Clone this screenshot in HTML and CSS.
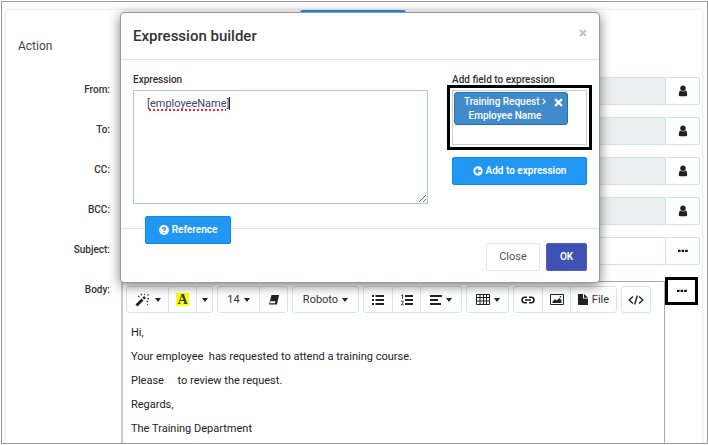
FILE: index.html
```html
<!DOCTYPE html>
<html lang="en">
<head>
<meta charset="utf-8">
<title>Expression builder</title>
<link rel="stylesheet" href="styles.css">
</head>
<body>
<svg class="defs" aria-hidden="true">
  <symbol id="user" viewBox="0 0 10 12"><circle cx="5" cy="3.2" r="2.7"/><path d="M2.4 5.4Q.8 6.2.8 10q0 1.2 1.3 1.2h5.8Q9.200 11.200 9.200 10 9.200 6.200 7.600 5.400 5 7.600 2.400 5.400z"/></symbol>
  <symbol id="dots" viewBox="0 0 10 4"><path d="M0 .7h2.600v2.400H0zM3.600.7h2.600v2.400H3.600zM7.200.7h2.600v2.400H7.200z"/></symbol>
  <symbol id="caret" viewBox="0 0 6 4"><path d="M0 0h6L3 4z"/></symbol>
</svg>
<main class="frame">
  <section class="panel">
    <button class="tab" type="button" aria-label="Add action"></button>
    <h1 class="heading">Action</h1>
    <form class="rows">
      <div class="row"><label for="from">From:</label><input id="from" type="text" disabled><button class="addon" type="button" aria-label="Pick sender"><svg class="user"><use href="#user"/></svg></button></div>
      <div class="row"><label for="to">To:</label><input id="to" type="text" disabled><button class="addon" type="button" aria-label="Pick recipient"><svg class="user"><use href="#user"/></svg></button></div>
      <div class="row"><label for="cc">CC:</label><input id="cc" type="text" disabled><button class="addon" type="button" aria-label="Pick CC"><svg class="user"><use href="#user"/></svg></button></div>
      <div class="row"><label for="bcc">BCC:</label><input id="bcc" type="text" disabled><button class="addon" type="button" aria-label="Pick BCC"><svg class="user"><use href="#user"/></svg></button></div>
      <div class="row"><label for="subject">Subject:</label><input id="subject" type="text"><button class="addon" type="button" aria-label="Subject expression"><svg class="dots"><use href="#dots"/></svg></button></div>
      <div class="row body-row">
        <span class="label" id="body-label">Body:</span>
        <div class="editor">
          <div class="toolbar">
            <div class="group">
              <button class="menu" type="button" aria-label="Style"><svg width="16" height="14" viewBox="0 0 16 14"><path d="M1.500 12.500 7.500 6.500" stroke="#222" stroke-width="2.800"/><path d="M8.300 5.700 10 4" stroke="#222" stroke-width="2.600"/><path d="M3 3l1.500 1M6 .8l.6 1.600M9.600.8 9.300 2M12.500 2.500l1-1M12.200 5.600h1.800M11.600 8l1.200 1M12 11.200l.8.5" stroke="#333" stroke-width="1.100"/></svg><svg class="caret"><use href="#caret"/></svg></button>
              <button class="tool" type="button"><span class="mark">A</span></button>
              <button class="more" type="button" aria-label="More colors"><svg class="caret"><use href="#caret"/></svg></button>
            </div>
            <div class="group">
              <button class="menu" type="button">14<svg class="caret"><use href="#caret"/></svg></button>
              <button class="tool" type="button" aria-label="Clear formatting"><svg width="12" height="10" viewBox="0 0 12 10"><path d="M3.500 0h7.500L9 9.500H1z" fill="#222"/><path d="M2.400 6.300h5.100L7 8.200H1.900z" fill="#fff"/></svg></button>
            </div>
            <div class="group">
              <button class="font" type="button">Roboto<svg class="caret"><use href="#caret"/></svg></button>
            </div>
            <div class="group">
              <button class="tool" type="button" aria-label="Bulleted list"><svg width="12" height="10" viewBox="0 0 12 10" fill="#222"><path d="M0 0h2v2H0zM0 4h2v2H0zM0 8h2v2H0zM3.500 0H12v2H3.500zM3.500 4H12v2H3.500zM3.500 8H12v2H3.500z"/></svg></button>
              <button class="tool" type="button" aria-label="Numbered list"><svg width="12" height="12" viewBox="0 0 12 12"><path d="M4 1h8v2H4zM4 5h8v2H4zM4 9h8v2H4z" fill="#222"/><path d="M.3 1.400 1.600.8V5M.2 7.300Q2.300 6.400 2.200 8T.3 10.800h2.300" fill="none" stroke="#222" stroke-width=".9"/></svg></button>
              <button class="menu" type="button" aria-label="Paragraph"><svg width="12" height="10" viewBox="0 0 12 10"><path d="M0 1h12M0 5h8M0 9h11" stroke="#222" stroke-width="2"/></svg><svg class="caret"><use href="#caret"/></svg></button>
            </div>
            <div class="group">
              <button class="menu" type="button" aria-label="Table"><svg width="14" height="11" viewBox="0 0 14 11"><path d="M.5.5h13v10H.5zM.5 3.500h13M.5 7h13M4 .5v10M7.500.5v10M10.500.5v10" fill="none" stroke="#222"/></svg><svg class="caret"><use href="#caret"/></svg></button>
            </div>
            <div class="group">
              <button class="tool" type="button" aria-label="Link"><svg width="14" height="8" viewBox="0 0 14 8"><path d="M6 1.200H3.800a2.700 2.700 0 0 0 0 5.600H6M8 1.200h2.200a2.700 2.700 0 0 1 0 5.600H8M4 4h6" fill="none" stroke="#222" stroke-width="1.600"/></svg></button>
              <button class="tool" type="button" aria-label="Picture"><svg width="14" height="11" viewBox="0 0 14 11"><path d="M.5.500h13v10H.5z" fill="none" stroke="#222"/><path d="M2.500 9V7.500L5 5l1.500 1.600L9.500 4l2 2.500V9z" fill="#222"/><circle cx="10.500" cy="2.800" r=".8" fill="#222"/></svg></button>
              <button class="file" type="button"><svg width="10" height="11" viewBox="0 0 10 11"><path d="M0 0h5v4.500h5V11H0zM6 0l4 3.700H6z" fill="#222"/></svg>File</button>
            </div>
            <div class="group">
              <button class="tool" type="button" aria-label="Code view"><svg width="16" height="10" viewBox="0 0 16 10"><path d="M5 1.500 1.200 5 5 8.500M11 1.500 14.800 5 11 8.500M9.300.5 6.700 9.500" fill="none" stroke="#222" stroke-width="1.400"/></svg></button>
            </div>
          </div>
          <div class="content" role="textbox" aria-labelledby="body-label">
            <p>Hi,</p>
            <p>Your employee&nbsp; has requested to attend a training course.</p>
            <p>Please&nbsp;&nbsp; &nbsp; to review the request.</p>
            <p>Regards,</p>
            <p>The Training Department</p>
          </div>
        </div>
        <button class="addon marked" type="button" aria-label="Body expression"><svg class="dots"><use href="#dots"/></svg></button>
      </div>
    </form>
  </section>
</main>

<div class="modal" role="dialog" aria-labelledby="modal-title">
  <header class="modal-head">
    <h2 id="modal-title">Expression builder</h2>
    <button class="close" type="button" aria-label="Dismiss"><svg width="8" height="8" viewBox="0 0 8 8"><path d="M1 1l6 6M7 1 1 7" stroke="#c2c2c2" stroke-width="2"/></svg></button>
  </header>
  <div class="modal-body">
    <div class="expression">
      <label for="expression">Expression</label>
      <div class="area"><textarea id="expression" spellcheck="false"></textarea><div class="typed"><span>[<u>employeeName</u>]</span></div></div>
    </div>
    <div class="fields">
      <span class="label" id="field-label">Add field to expression</span>
      <div class="picker" role="group" aria-labelledby="field-label">
        <div class="chip">
          <span>Training Request <svg width="4" height="7" viewBox="0 0 4 7"><path d="M.6.800 3.200 3.500.6 6.200" fill="none" stroke="#fff" stroke-width="1.200"/></svg><br>Employee Name</span>
          <button type="button" aria-label="Remove field"><svg width="9" height="9" viewBox="0 0 8 8"><path d="M1 1l6 6M7 1 1 7" stroke="#fff" stroke-width="1.900"/></svg></button>
        </div>
      </div>
      <button class="btn blue" type="button"><svg width="10" height="10" viewBox="0 0 10 10"><circle cx="5" cy="5" r="4.700" fill="#fff"/><path d="M8 5H3M5.200 2.500 2.700 5l2.500 2.500" fill="none" stroke="#2196f3" stroke-width="1.400"/></svg>Add to expression</button>
    </div>
  </div>
  <footer class="modal-foot">
    <button class="btn blue reference" type="button"><svg width="10" height="10" viewBox="0 0 10 10"><circle cx="5" cy="5" r="4.900" fill="#fff"/><path d="M3.400 3.900Q3.400 2.500 5 2.500T6.600 3.800Q6.600 4.500 5.700 4.900 5 5.200 5 6M5 6.900v1.300" fill="none" stroke="#2196f3" stroke-width="1.300"/></svg>Reference</button>
    <button class="btn plain" type="button">Close</button>
    <button class="btn ok" type="button">OK</button>
  </footer>
</div>
</body>
</html>
```
FILE: styles.css
```css
* { box-sizing: border-box; }
body { margin: 0; height: 100vh; overflow: hidden; background: #fff; color: #333; font: 11px/16px Roboto, sans-serif; position: relative; }
button, input, textarea { font: inherit; color: inherit; margin: 0; padding: 0; }
button { display: flex; align-items: center; justify-content: center; gap: 4px; border: 0; background: none; white-space: nowrap; }
svg { flex: none; }
.defs { position: absolute; width: 0; height: 0; }
.user { width: 10px; height: 12px; fill: #222; }
.dots { width: 10px; height: 4px; fill: #111; }
.caret { width: 6px; height: 4px; fill: #222; }

.frame { height: calc(100vh - 2px); margin: 1px 0 0 1px; padding: 8px 5px 0 4px; border: 1px solid #999; overflow: hidden; }
.panel { height: 600px; border-radius: 2px; box-shadow: 0 0 3px rgba(0,0,0,.18); }
.tab { width: 106px; height: 28px; margin: 0 0 0 294px; background: #2196f3; border-radius: 3px; }
.heading { margin: 0 0 22px 12px; font-size: 12px; font-weight: 400; line-height: 17px; color: #444; }

.rows { display: flex; flex-direction: column; gap: 12px; padding-right: 2px; }
.row { display: flex; height: 28px; }
.row > label, .row > .label { width: 104px; margin-right: 11px; padding-top: 5px; text-align: right; }
label, .label { font-size: 10px; font-weight: 500; line-height: 16px; color: #333; }
.row > input { flex: 1; min-width: 0; border: 1px solid #d5e2e4; border-right: 0; border-radius: 2px 0 0 2px; background: #fff; }
.row > input:disabled { background: #eaeeef; }
.addon { width: 35px; height: 28px; border: 1px solid #d5e2e4; border-radius: 0 2px 2px 0; background: #fff; }
.marked { border: 3px solid #000; border-radius: 0; width: 33px; margin-right: 2px; }
.body-row { height: auto; align-items: flex-start; }
.editor { flex: 1; min-width: 0; height: 400px; margin-top: 4px; border: 1px solid #aaa; border-left: 2px solid #ccc; }

.toolbar { display: flex; gap: 4px; padding: 4px 3px; }
.group { display: flex; height: 27px; border: 1px solid #d8e6e8; border-radius: 3px; background: #fff; }
.group button + button { border-left: 1px solid #d8e6e8; }
.more { width: 16px; }
.tool { width: 28px; }
.menu { width: 41px; }
.file { width: 46px; }
.font { width: 65px; }
.mark { padding: 0 1px; background: #ff0; font: bold 14px/13px "Liberation Serif", serif; }
.content { padding: 4px 8px; color: #222; }
.content p { margin: 0; line-height: 24px; }

.modal { position: absolute; top: 12px; left: 120px; right: 108px; border: 1px solid #999; border-radius: 4px; background: #fff; box-shadow: 0 3px 12px rgba(0,0,0,.5); }
.modal-head { display: flex; align-items: center; justify-content: space-between; height: 47px; padding: 0 12px; border-bottom: 1px solid #e0e2e3; }
.modal-head h2 { margin: 0; font-size: 15px; font-weight: 500; line-height: 20px; color: #333; }
.close { width: 8px; height: 8px; margin-bottom: 6px; }
.modal-body { display: flex; gap: 24px; height: 168px; padding: 12px 12px 0; }
.expression { flex: 1; }
.expression label, .fields .label { display: block; margin-bottom: 2px; }
.area { position: relative; height: 114px; }
.area textarea { display: block; width: 100%; height: 100%; border: 1px solid #b6c6cd; resize: vertical; }
.typed { position: absolute; top: 6px; left: 14px; color: #446; pointer-events: none; }
.typed span { border-right: 1px solid #223; }
.typed u { text-decoration: underline dotted #f22 2px; text-decoration-skip-ink: none; text-underline-offset: 2px; }
.fields { width: 135px; }
.picker { height: 55px; padding: 1px; border: 1px solid #ccc; outline: 3px solid #000; outline-offset: 2px; }
.chip { display: flex; justify-content: flex-end; align-items: flex-start; gap: 8px; width: 114px; height: 33px; padding: 2px 4px 0 0; border: 1px solid #2272b9; border-radius: 3px; background: #428bca; color: #fff; font-size: 10px; font-weight: 500; line-height: 14px; text-align: center; white-space: nowrap; }
.chip button { height: 14px; }
.btn { height: 28px; border: 1px solid; border-radius: 2px; font-size: 10px; font-weight: 600; line-height: 16px; }
.blue { gap: 3px; background: #2196f3; border-color: #0d8aee; color: #fff; }
.fields .btn { width: 100%; margin-top: 12px; }
.modal-foot { position: relative; display: flex; justify-content: flex-end; gap: 6px; padding: 14px 12px 11px; border-top: 1px solid #e0e2e3; }
.reference { position: absolute; top: -13px; left: 24px; width: 86px; }
.plain { width: 54px; border-color: #e5e8e9; background: #fff; font-size: 11px; font-weight: 400; color: #555; }
.ok { width: 41px; border-color: #5360c0; background: #3f51b5; color: #fff; }
```
